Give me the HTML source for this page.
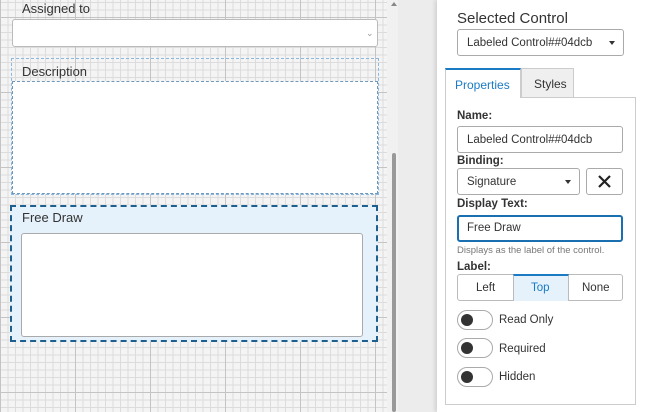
<!DOCTYPE html>
<html><head><style>
*{box-sizing:border-box;margin:0;padding:0}
body{width:645px;height:412px;overflow:hidden;font-family:"Liberation Sans",sans-serif;color:#333;background:#ececec;position:relative}
.abs{position:absolute}
.grid{left:0;top:0;width:387px;height:412px;background-color:#f4f4f4;
background-image:
linear-gradient(to right,#c4c4c4 1px,transparent 1px),
linear-gradient(to bottom,#c4c4c4 1px,transparent 1px),
linear-gradient(to right,#dcdcdc 1px,transparent 1px),
linear-gradient(to bottom,#dcdcdc 1px,transparent 1px);
background-size:75px 75px,75px 75px,7.5px 7.5px,7.5px 7.5px;
background-position:0 17px,0 17px,0 2px,0 2px}
.lbl{font-size:13px;color:#333}
.panel{left:437px;top:0;width:208px;height:412px;background:#fff;box-shadow:-2px 0 4px rgba(0,0,0,.12)}
.box{border:1px solid #aaa;border-radius:3px;background:#fff}
.b{font-size:11.5px;font-weight:bold;color:#333}
.txt{font-size:11.5px;color:#333}
.tog{width:36px;height:20px;border:1px solid #aaa;border-radius:10px;background:#fff}
.tog:after{content:"";position:absolute;left:3px;top:3px;width:12px;height:12px;border-radius:50%;background:#333}
</style></head><body>
<div class="abs grid"></div>
<div class="abs" style="left:387px;top:0;width:11px;height:412px;background:#f1f1f1"></div>
<div class="abs" style="left:391px;top:2px;width:0;height:0;border-left:3px solid transparent;border-right:3px solid transparent;border-bottom:4px solid #888"></div>
<div class="abs" style="left:392px;top:153px;width:4px;height:259px;background:#999;border-radius:2px"></div>

<div class="abs lbl" style="left:22px;top:1px">Assigned to</div>
<div class="abs box" style="left:12px;top:19px;width:366px;height:28px;border-color:#bbb"></div>
<div class="abs" style="left:366px;top:28px;font-size:9px;color:#999">&#8964;</div>

<div class="abs" style="left:11px;top:58px;width:368px;height:137px;border:1px dashed #8ab8de"></div>
<div class="abs lbl" style="left:22px;top:64px">Description</div>
<div class="abs" style="left:12px;top:81px;width:366px;height:113px;background:#fff;border:1px dashed #6f98bd"></div>

<div class="abs" style="left:10px;top:205px;width:368px;height:137px;background:#e5f2fb;border:2px dashed #1f5f8d"></div>
<div class="abs lbl" style="left:22px;top:210px">Free Draw</div>
<div class="abs box" style="left:21px;top:233px;width:342px;height:104px;border-color:#aaa"></div>

<div class="abs panel"></div>
<div class="abs" style="left:457px;top:10px;font-size:15px;color:#333">Selected Control</div>
<div class="abs box" style="left:457px;top:29px;width:167px;height:27px"></div>
<div class="abs txt" style="left:467px;top:37px">Labeled Control##04dcb</div>
<div class="abs" style="left:609px;top:41px;border-left:3px solid transparent;border-right:3px solid transparent;border-top:4px solid #333"></div>

<div class="abs" style="left:445px;top:97px;width:191px;height:308px;border:1px solid #ccc"></div>
<div class="abs" style="left:445px;top:68px;width:76px;height:30px;background:#fff;border:1px solid #ccc;border-top:2px solid #1a7bc4;border-bottom:none;color:#1a7bc4;font-size:12px;padding:8px 0 0 9px">Properties</div>
<div class="abs" style="left:521px;top:68px;width:53px;height:30px;background:#efefef;border:1px solid #ccc;font-size:12px;padding:8px 0 0 12px">Styles</div>

<div class="abs b" style="left:457px;top:110px">Name:</div>
<div class="abs box" style="left:457px;top:126px;width:166px;height:27px"></div>
<div class="abs txt" style="left:467px;top:134px">Labeled Control##04dcb</div>
<div class="abs b" style="left:457px;top:155px">Binding:</div>
<div class="abs box" style="left:457px;top:168px;width:123px;height:27px"></div>
<div class="abs txt" style="left:467px;top:176px">Signature</div>
<div class="abs" style="left:565px;top:180px;border-left:3px solid transparent;border-right:3px solid transparent;border-top:4px solid #333"></div>
<div class="abs box" style="left:586px;top:168px;width:37px;height:27px"></div>
<svg class="abs" style="left:597px;top:174px" width="15" height="15"><path d="M2 2L13 13M13 2L2 13" stroke="#222" stroke-width="2.2"/></svg>
<div class="abs b" style="left:457px;top:198px">Display Text:</div>
<div class="abs box" style="left:457px;top:215px;width:166px;height:27px;border:2px solid #1a6fb0"></div>
<div class="abs txt" style="left:467px;top:222px">Free Draw</div>
<div class="abs" style="left:457px;top:245px;font-size:9.5px;color:#777">Displays as the label of the control.</div>
<div class="abs b" style="left:457px;top:261px">Label:</div>
<div class="abs box" style="left:457px;top:274px;width:166px;height:27px;border-color:#bbb"></div>
<div class="abs" style="left:513px;top:274px;width:56px;height:27px;background:#e5f2fb;border-left:1px solid #bbb;border-right:1px solid #bbb;border-top:2px solid #1a7bc4"></div>
<div class="abs txt" style="left:476px;top:282px">Left</div>
<div class="abs txt" style="left:531px;top:282px;color:#1a7bc4">Top</div>
<div class="abs txt" style="left:582px;top:282px">None</div>

<div class="abs tog" style="left:457px;top:310px"></div>
<div class="abs txt" style="left:499px;top:314px">Read Only</div>
<div class="abs tog" style="left:457px;top:338px"></div>
<div class="abs txt" style="left:499px;top:343px">Required</div>
<div class="abs tog" style="left:457px;top:367px"></div>
<div class="abs txt" style="left:499px;top:371px">Hidden</div>
</body></html>
